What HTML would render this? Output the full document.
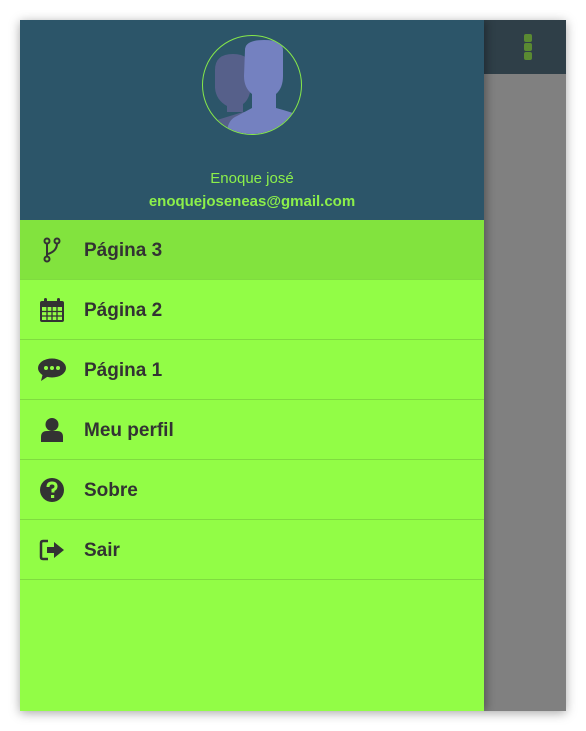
<!DOCTYPE html>
<html><head><style>
body{margin:0;width:586px;height:731px;background:#fff;position:relative;overflow:hidden;font-family:"Liberation Sans",sans-serif}
.frame{position:absolute;left:20px;top:20px;width:546px;height:691px;box-shadow:0 2px 10px rgba(0,0,0,.35);background:#808080;overflow:hidden}
.bar{position:absolute;left:464px;top:0;width:82px;height:54px;background:#2f3f48}
.dots{position:absolute;left:504px;top:14px}
.dots i{display:block;width:8px;height:8px;background:#5a8a32;border-radius:2px;margin-bottom:1px}
.drawer{position:absolute;left:0;top:0;width:464px;height:691px;background:#92fd46;box-shadow:3px 0 8px rgba(0,0,0,.3)}
.head{height:200px;background:#2c5569;position:relative;color:#8cf04a;text-align:center}
.av{position:absolute;left:182px;top:15px;width:98px;height:98px;border:1.5px solid #86e84a;border-radius:50%;overflow:hidden}
.n{position:absolute;top:150px;width:100%;font-size:15px}
.e{position:absolute;top:173px;width:100%;font-size:15px;font-weight:bold}
.it{border-bottom:1px solid #7fdc3f;display:flex;align-items:center;color:#333;font-size:19px;font-weight:bold;padding-top:3px;box-sizing:border-box;height:60px}
.it.a{background:#82e33e}
.ic{width:64px;display:flex;justify-content:center;margin-top:-3px}
</style></head><body>
<div class="frame">
<div class="bar"></div>
<div class="dots"><i></i><i></i><i></i></div>
<div class="drawer">
<div class="head">
<div class="av"><svg width="98" height="98" viewBox="0 0 98 98">
<path fill="#56608a" d="M12 34 Q12 18 30 18 Q48 18 48 34 L48 52 Q46 64 40 68 L40 76 L14 84 L4 98 L60 98 L60 76 L24 76 L24 70 Q13 64 12 52Z"/>
<path fill="#7481c0" d="M42 14 Q42 4 61 4 Q80 4 80 14 L80 40 Q80 52 73 58 L73 72 Q88 76 98 80 L98 98 L24 98 Q24 84 34 80 L49 72 L49 58 Q41 52 41 40Z"/>
</svg></div>
<div class="n">Enoque josé</div>
<div class="e">enoquejoseneas@gmail.com</div>
</div>
<div class="it a"><div class="ic"><svg width="20" height="26" viewBox="0 0 20 26" fill="none" stroke="#333" stroke-width="2"><circle cx="5" cy="4" r="2.5"/><circle cx="15" cy="4" r="2.5"/><circle cx="5" cy="22" r="2.5"/><path d="M5 6.5V19.5M15 6.5Q15 14 6 17"/></svg></div>Página 3</div>
<div class="it"><div class="ic"><svg width="26" height="26" viewBox="0 0 26 26"><rect x="1" y="4" width="24" height="21" rx="2" fill="#333"/><g fill="#92fd46"><rect x="3" y="10" width="20" height="13"/></g><g stroke="#333" stroke-width="1.3"><path d="M8 10V23M13 10V23M18 10V23M3 14.5H23M3 19H23"/></g><rect x="5" y="1" width="3" height="6" rx="1.5" fill="#333"/><rect x="18" y="1" width="3" height="6" rx="1.5" fill="#333"/></svg></div>Página 2</div>
<div class="it"><div class="ic"><svg width="28" height="24" viewBox="0 0 28 24"><ellipse cx="14" cy="10" rx="14" ry="9.5" fill="#333"/><path d="M5 15 L3 23 L12 17Z" fill="#333"/><circle cx="8" cy="10" r="2" fill="#92fd46"/><circle cx="14" cy="10" r="2" fill="#92fd46"/><circle cx="20" cy="10" r="2" fill="#92fd46"/></svg></div>Página 1</div>
<div class="it"><div class="ic"><svg width="22" height="24" viewBox="0 0 22 24" fill="#333"><circle cx="11" cy="6.5" r="6.5"/><path d="M0 24V19Q0 13 6 13H16Q22 13 22 19V24Z"/></svg></div>Meu perfil</div>
<div class="it"><div class="ic"><svg width="24" height="24" viewBox="0 0 24 24"><circle cx="12" cy="12" r="12" fill="#333"/><path d="M8 9Q8 5 12 5Q16 5 16 8.5Q16 11 13 12V14.5" stroke="#92fd46" stroke-width="3" fill="none"/><rect x="11" y="17" width="3.2" height="3" fill="#92fd46"/></svg></div>Sobre</div>
<div class="it"><div class="ic"><svg width="26" height="22" viewBox="0 0 26 22"><path d="M9 2H4Q2 2 2 4V18Q2 20 4 20H9" stroke="#333" stroke-width="2.5" fill="none"/><path d="M8 8H15V3L25 11L15 19V14H8Z" fill="#333"/></svg></div>Sair</div>
</div>
</div>
</body></html>
